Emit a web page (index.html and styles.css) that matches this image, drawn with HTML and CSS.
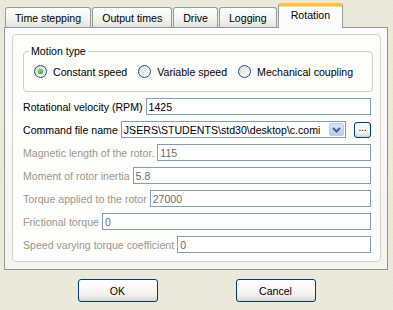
FILE: index.html
```html
<!DOCTYPE html>
<html lang="en">

<head>
    <meta charset="UTF-8">
    <title>Rotation</title>
    <link rel="stylesheet" href="styles.css">
</head>

<body>

    <div class="dialog">
        <div class="tabs">
            <div class="tab">Time stepping</div>
            <div class="tab">Output times</div>
            <div class="tab">Drive</div>
            <div class="tab">Logging</div>
            <div class="tab active">Rotation</div>
        </div>

        <div class="panel">
            <div class="frame">
                <fieldset class="group">
                    <legend>Motion type</legend>
                    <div class="radios">
                        <label class="radio"><span class="circle checked"></span>Constant speed</label>
                        <label class="radio"><span class="circle"></span>Variable speed</label>
                        <label class="radio"><span class="circle"></span>Mechanical coupling</label>
                    </div>
                </fieldset>

                <div class="row">
                    <span class="lbl">Rotational velocity (RPM)</span>
                    <input class="field" type="text" value="1425">
                </div>
                <div class="row">
                    <span class="lbl">Command file name</span>
                    <div class="combo">
                        <span class="combo-text">JSERS\STUDENTS\std30\desktop\c.comi</span>
                        <span class="combo-btn">
                            <svg width="9" height="6" viewBox="0 0 9 6">
                                <path d="M1 1 L4.5 4.5 L8 1" fill="none" stroke="#4D6185" stroke-width="2"/>
                            </svg>
                        </span>
                    </div>
                    <button class="dots">...</button>
                </div>
                <div class="row off">
                    <span class="lbl">Magnetic length of the rotor.</span>
                    <input class="field" type="text" value="115">
                </div>
                <div class="row off">
                    <span class="lbl">Moment of rotor inertia</span>
                    <input class="field" type="text" value="5.8">
                </div>
                <div class="row off">
                    <span class="lbl">Torque applied to the rotor</span>
                    <input class="field" type="text" value="27000">
                </div>
                <div class="row off">
                    <span class="lbl">Frictional torque</span>
                    <input class="field" type="text" value="0">
                </div>
                <div class="row off">
                    <span class="lbl">Speed varying torque coefficient</span>
                    <input class="field" type="text" value="0">
                </div>
            </div>
        </div>

        <div class="buttons">
            <button class="btn">OK</button>
            <button class="btn">Cancel</button>
        </div>
    </div>

</body>

</html>
```

FILE: styles.css
```css
body {
    margin: 0;
    width: 393px;
    height: 310px;
    overflow: hidden;
    font-family: "Liberation Sans", Arial, sans-serif;
    font-size: 10.6px;
    color: #000000;
    background-color: #ECE9D8;
    background-image: repeating-conic-gradient(#EFEDDF 0 25%, #E8E5D3 0 50%);
    background-size: 2px 2px;
}

.tabs {
    display: flex;
    align-items: flex-end;
    height: 27px;
    padding-left: 5px;
}

.tab {
    display: flex;
    align-items: center;
    box-sizing: border-box;
    height: 20px;
    padding: 0 9px 0 9px;
    margin-right: 1px;
    border: 1px solid #919B9C;
    border-bottom: none;
    border-radius: 3px 3px 0 0;
    background: linear-gradient(#FFFFFF, #F3F3EF 60%, #E6E5DE);
    white-space: nowrap;
}

.tab.active {
    position: relative;
    z-index: 1;
    height: 25px;
    margin-bottom: -1px;
    padding: 0 12px 4px 12px;
    border-top: 3px solid #FBC244;
    box-shadow: inset 0 1px 0 #FFD87A;
    background: #FCFCFE;
}

.panel {
    display: flex;
    flex-direction: column;
    box-sizing: border-box;
    width: 384px;
    height: 243px;
    margin-left: 4px;
    padding: 6px 6px 7px 7px;
    border: 1px solid #919B9C;
    border-right-color: #8A9294;
    border-bottom-color: #8A9294;
    background: linear-gradient(#FCFCFE, #F5F4EF);
}

.frame {
    flex: 1;
    display: flex;
    flex-direction: column;
    gap: 6px;
    padding: 10px 9px 0 10px;
    border: 1px solid #D6D3C6;
    border-radius: 4px;
    background: #FDFDFC;
}

.group {
    margin: 0;
    padding: 7px 8px 13px 10px;
    border: 1px solid #D0D0BF;
    border-radius: 4px;
}

.group legend {
    margin-left: -5px;
    padding: 0 2px;
    line-height: 13px;
}

.radios {
    display: flex;
    align-items: center;
    height: 13px;
}

.radio {
    display: flex;
    align-items: center;
    flex-shrink: 0;
    margin-right: 11px;
    white-space: nowrap;
}

.circle {
    position: relative;
    box-sizing: border-box;
    width: 13px;
    height: 13px;
    margin-right: 6px;
    border: 1px solid #1C5180;
    border-radius: 50%;
    background: linear-gradient(135deg, #DCDCD7, #FFFFFF);
}

.circle.checked::after {
    content: "";
    position: absolute;
    left: 3px;
    top: 3px;
    width: 5px;
    height: 5px;
    border-radius: 50%;
    background: radial-gradient(circle at 40% 35%, #8FE08F, #21A121 70%);
}

.row {
    display: flex;
    align-items: center;
    height: 17px;
}

.lbl {
    margin-right: 3px;
    white-space: nowrap;
}

.field {
    flex: 1;
    box-sizing: border-box;
    min-width: 0;
    height: 17px;
    margin: 0;
    padding: 0 2px;
    border: 1px solid #7F9DB9;
    background: #FFFFFF;
    font-family: "Liberation Sans", Arial, sans-serif;
    font-size: 10.6px;
    color: #000000;
    outline: none;
}

.row.off .lbl {
    color: #9C988A;
}

.row.off .field {
    color: #6E6C64;
}

.combo {
    display: flex;
    align-items: center;
    box-sizing: border-box;
    width: 229px;
    height: 17px;
    padding: 0 1px 0 2px;
    border: 1px solid #7F9DB9;
    background: #FFFFFF;
}

.combo-text {
    flex: 1;
    white-space: nowrap;
}

.combo-btn {
    display: flex;
    align-items: center;
    justify-content: center;
    box-sizing: border-box;
    width: 15px;
    height: 13px;
    border: 1px solid #B9CCF6;
    border-radius: 2px;
    background: linear-gradient(#D9E5FD, #B7CBF6);
}

.dots {
    box-sizing: border-box;
    width: 17px;
    height: 16px;
    margin-left: 8px;
    padding: 0 0 3px 0;
    border: 1px solid #003C74;
    border-radius: 3px;
    background: linear-gradient(#FFFFFF, #F2F1EC 70%, #DCD8CC);
    font-family: "Liberation Sans", Arial, sans-serif;
    font-size: 10px;
    line-height: 10px;
}

.buttons {
    display: flex;
    justify-content: center;
    gap: 78px;
    margin-top: 9px;
}

.btn {
    box-sizing: border-box;
    width: 80px;
    height: 23px;
    margin: 0;
    padding: 0;
    border: 1px solid #003C74;
    border-radius: 3px;
    background: linear-gradient(#FFFFFF, #F4F3EE 70%, #D9D5CA);
    font-family: "Liberation Sans", Arial, sans-serif;
    font-size: 10.6px;
    color: #000000;
}
```
